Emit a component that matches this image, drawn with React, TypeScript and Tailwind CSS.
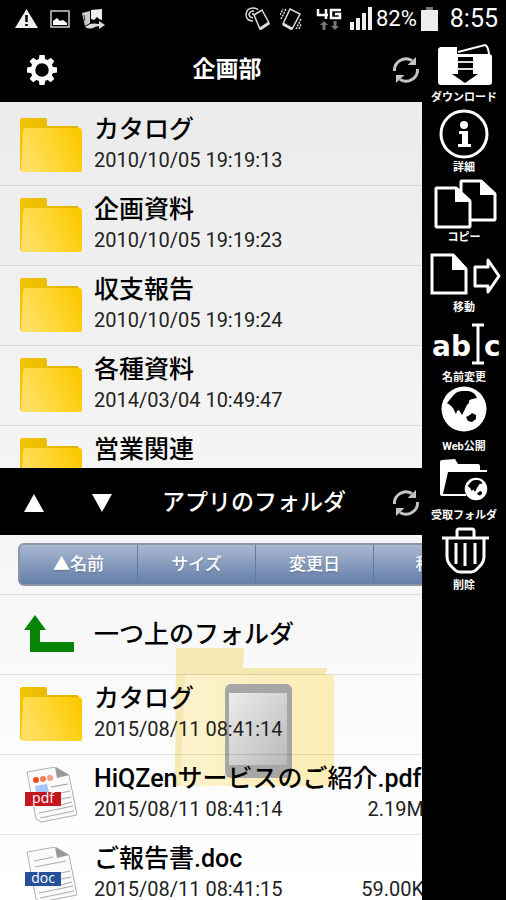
import React from 'react';

interface Entry {
  name: string;
  date?: string;
  size?: string;
  kind: 'folder' | 'up' | 'pdf' | 'doc';
}

const REMOTE: Entry[] = [
  { name: 'カタログ', date: '2010/10/05 19:19:13', kind: 'folder' },
  { name: '企画資料', date: '2010/10/05 19:19:23', kind: 'folder' },
  { name: '収支報告', date: '2010/10/05 19:19:24', kind: 'folder' },
  { name: '各種資料', date: '2014/03/04 10:49:47', kind: 'folder' },
  { name: '営業関連', date: '', kind: 'folder' },
];

const LOCAL: Entry[] = [
  { name: '一つ上のフォルダ', kind: 'up' },
  { name: 'カタログ', date: '2015/08/11 08:41:14', kind: 'folder' },
  { name: 'HiQZenサービスのご紹介.pdf', date: '2015/08/11 08:41:14', size: '2.19M', kind: 'pdf' },
  { name: 'ご報告書.doc', date: '2015/08/11 08:41:15', size: '59.00K', kind: 'doc' },
];

const SORT_KEYS = ['▲名前', 'サイズ', '変更日', '種類'];

/* ---------- file icons ---------- */

const FolderIcon = () => (
  <svg viewBox="0 0 62 56" className="w-[62px] h-14">
    <defs>
      <linearGradient id="folderFront" x1="0" y1="0.6" x2="1" y2="0.3">
        <stop offset="0" stopColor="#ffe066" />
        <stop offset="0.5" stopColor="#ffd633" />
        <stop offset="1" stopColor="#fbc900" />
      </linearGradient>
      <linearGradient id="folderBack" x1="0" y1="0" x2="1" y2="0">
        <stop offset="0" stopColor="#f2c400" />
        <stop offset="1" stopColor="#dfb200" />
      </linearGradient>
    </defs>
    <path d="M0 2Q0 0 2 0H25Q27 0 27 2V8H56Q59 8 59 11V53H2Q0 53 0 51Z" fill="url(#folderBack)" />
    <path d="M3 13Q3 10 6 10H59Q62 10 62 13V52Q62 54 60 54H3Q1 54 1 51Z" fill="url(#folderFront)" />
  </svg>
);

const UpIcon = () => (
  <svg viewBox="0 0 62 56" className="w-[62px] h-14">
    <path d="M15 8L26 23H20V35H54V45H10V23H4Z" fill="#058405" />
  </svg>
);

const DocumentIcon = ({ kind }: { kind: 'pdf' | 'doc' }) => (
  <svg viewBox="0 0 62 56" className="w-[62px] h-14">
    <path d="M7 5L35 0L49 8L57 48L21 55L16 52Z" fill="#fafafa" stroke="#b0b0b0" strokeWidth="1" />
    <path d="M35 0L49 8L37 11Z" fill="#999" />
    {kind === 'pdf' ? (
      <g>
        <circle cx="16" cy="13" r="3" fill="#f04a22" />
        <circle cx="23" cy="12" r="3" fill="#f37a52" />
        <circle cx="30" cy="11" r="3" fill="#f5a080" />
        <path d="M15 19L27 17L29 25H16Z" fill="#a9c4fa" />
        <path d="M31 20L48 17" stroke="#999" />
      </g>
    ) : (
      <path d="M14 14L33 10M15 20L46 14" stroke="#aaa" />
    )}
    <path d="M41 26L50 24M41 32L51 30M41 38L52 35M19 46L53 39M20 51L54 44" stroke="#aaa" strokeWidth="1" />
    <rect x="5" y="25" width="36" height="14" fill={kind === 'pdf' ? '#c4161f' : '#27509a'} />
    <text x="23" y="36" textAnchor="middle" fontSize="14" fill="#fff" fontFamily="'Open Sans', sans-serif">
      {kind}
    </text>
  </svg>
);

const EntryIcon = ({ kind }: { kind: Entry['kind'] }) => {
  if (kind === 'folder') return <FolderIcon />;
  if (kind === 'up') return <UpIcon />;
  return <DocumentIcon kind={kind} />;
};

/* ---------- toolbar icons ---------- */

const GearIcon = () => (
  <svg viewBox="-16 -16 32 32" className="size-8" fill="#fff">
    <circle r="9" fill="none" stroke="#fff" strokeWidth="4.5" />
    {[0, 45, 90, 135, 180, 225, 270, 315].map((a) => (
      <path key={a} d="M-3.5 -9L-2.5 -15H2.5L3.5 -9Z" transform={`rotate(${a})`} />
    ))}
  </svg>
);

const RefreshIcon = () => (
  <svg viewBox="-14 -14 28 28" className="size-7" fill="none" stroke="#c4c4c4" strokeWidth="3">
    <path d="M-11.5 1A11.5 11.5 0 0 1 6 -9.5" />
    <path d="M11.5 -1A11.5 11.5 0 0 1 -6 9.5" />
    <path d="M10 -13V-5H1.5Z" fill="#c4c4c4" stroke="none" />
    <path d="M-10 13V5H-1.5Z" fill="#c4c4c4" stroke="none" />
  </svg>
);

/* ---------- side menu icons ---------- */

const Globe = () => (
  <g>
    <circle r="22.5" fill="#fff" />
    <path
      d="M-17 -6L-12 -12Q-8 -18 -2 -18H4Q11 -17 13 -11L8 -10Q4 -9 5 -6Q3 -5 2 -2L-1 4L-2 6L-5 1L-7 2L-8 5L-11 -1L-14 -4Z"
      fill="#000"
    />
    <path d="M2 8L6 6L8 4L12 6L12 10L8 13L4 12Z" fill="#000" />
  </g>
);

const SIDE_ITEMS = [
  {
    label: 'ダウンロード',
    icon: (
      <svg viewBox="0 0 84 56" className="w-[84px] h-14">
        <path d="M18 12H35V19H67Q70 19 70 22V47Q70 50 67 50H19Q16 50 16 47V14Z" fill="#fff" />
        <path d="M36 17L63 10Q66 11 67 19" fill="none" stroke="#fff" strokeWidth="2" />
        <path d="M36 22H51V39H56L43 48L30 39H36Z" fill="#000" />
        <path d="M35 27H52M35 34H52" stroke="#ddd" strokeWidth="2" />
      </svg>
    ),
  },
  {
    label: '詳細',
    icon: (
      <svg viewBox="0 0 84 56" className="w-[84px] h-14">
        <circle cx="42" cy="29" r="23" fill="none" stroke="#fff" strokeWidth="3" />
        <circle cx="42" cy="20" r="4" fill="#fff" />
        <path d="M37 26H46V39H49V42H36V39H40V29H37Z" fill="#fff" />
      </svg>
    ),
  },
  {
    label: 'コピー',
    icon: (
      <svg viewBox="0 0 84 56" className="w-[84px] h-14" stroke="#fff" strokeWidth="3">
        <path d="M39 6H59L73 19V45H39Z" strokeLinejoin="bevel" />
        <path d="M58 5H60L74 18V20H58Z" fill="#fff" stroke="none" />
        <path d="M14 13H34L48 26V52H14Z" strokeLinejoin="bevel" />
        <path d="M33 12H35L49 25V27H33Z" fill="#fff" stroke="none" />
      </svg>
    ),
  },
  {
    label: '移動',
    icon: (
      <svg viewBox="0 0 84 56" className="w-[84px] h-14" stroke="#fff" strokeWidth="3">
        <path d="M10 10H31L44 24V48H10Z" />
        <path d="M30 9H32L45 23V25H30Z" fill="#fff" stroke="none" />
        <path d="M53 22H66V15L77 31L66 47V41H53Z" strokeLinejoin="round" />
      </svg>
    ),
  },
  {
    label: '名前変更',
    icon: (
      <svg viewBox="0 0 84 56" className="w-[84px] h-14">
        <g fill="#fff" fontSize="28" fontWeight="700" fontFamily="'DejaVu Sans', sans-serif">
          <text x="10" y="41">ab</text>
          <text x="62" y="41">c</text>
        </g>
        <path d="M50 10H62M50 48H62M56 10V48" stroke="#fff" strokeWidth="3" />
      </svg>
    ),
  },
  {
    label: 'Web公開',
    icon: (
      <svg viewBox="0 0 84 55" className="w-[84px] h-[55px]">
        <g transform="translate(42 24)">
          <Globe />
        </g>
      </svg>
    ),
  },
  {
    label: '受取フォルダ',
    icon: (
      <svg viewBox="0 0 84 55" className="w-[84px] h-[55px]">
        <path d="M18 8Q18 6 20 6L33 5L36 10H56Q58 10 58 12V16H65V18H26L21 40H44V42H20Q18 42 18 40Z" fill="#fff" />
        <g transform="translate(54 35) scale(0.5)">
          <Globe />
        </g>
      </svg>
    ),
  },
  {
    label: '削除',
    icon: (
      <svg viewBox="0 0 84 56" className="w-[84px] h-14" fill="none" stroke="#fff" strokeWidth="3">
        <path d="M20 15H67M35 14V8Q35 6 37 6H50Q52 6 52 8V14" />
        <path d="M25 16V33Q25 39 29 43L33 47Q35 49 38 49H49Q52 49 54 47L58 43Q62 39 62 33V16" />
        <path d="M34 20V41M43 20V43M53 20V41" />
      </svg>
    ),
  },
];

/* ---------- layout parts ---------- */

const StatusBar = () => (
  <div className="h-[34px] shrink-0 flex items-center justify-between pl-[15px] pr-2 pt-1 text-white">
    <div className="flex items-center gap-3">
      <svg viewBox="0 0 23 20" className="w-[23px] h-5">
        <path d="M11.5 0L23 19H0Z" fill="#eee" />
        <path d="M11.5 6V13M11.5 15V17" stroke="#000" strokeWidth="2.5" />
      </svg>
      <svg viewBox="0 0 20 18" className="w-5 h-[18px]">
        <rect x="1" y="1" width="18" height="16" fill="none" stroke="#ccc" strokeWidth="1.5" />
        <path d="M3 15V11L7 8L10 11L13 10L17 13V15Z" fill="#fff" />
      </svg>
      <svg viewBox="0 0 23 21" className="w-[23px] h-[21px]">
        <path d="M0 4L8 2V14L3 17Z" fill="#ccc" />
        <path d="M9 1L20 0V11L17 10L15 8L12 11L9 10Z" fill="#eee" />
        <path d="M3 18Q8 21 13 18L17 17V20L23 16L17 12V15Q11 14 8 15Z" fill="#ddd" />
        <path d="M2 6L3 12" stroke="#333" />
      </svg>
    </div>
    <div className="flex items-center">
      <svg viewBox="0 0 25 24" className="w-[25px] h-6 mr-[10px]" fill="none" stroke="#ddd" strokeWidth="1.5">
        <path d="M9 8L17 3L24 16L15 22Z" />
        <path d="M15 22L24 16" strokeWidth="3" />
        <path d="M8 14Q1 14 1 7Q2 1 8 1Q12 1 13 3M8 11Q4 10 4 7Q5 4 9 4M7 7H9" />
      </svg>
      <svg viewBox="0 0 22 24" className="w-[22px] h-6 mr-[14px]" fill="none" stroke="#ddd" strokeWidth="1.5">
        <path d="M10 2L20 7L12 22L3 17Z" />
        <path d="M3 17L12 22" strokeWidth="3" />
        <path d="M1 12L6 2M0 8L3 2M16 22L21 12M19 22L21 17" strokeDasharray="2 1" />
      </svg>
      <svg viewBox="0 0 26 24" className="w-[26px] h-6 mr-2" fill="none" stroke="#fff" strokeWidth="2.5">
        <path d="M2 2V8H12M10 2V12M25 3H15V11H24V7H19" />
        <path d="M8 14L12 18H9.5V23H6.5V18H4ZM19 23L23 19H20.5V14H17.5V19H15Z" fill="#777" stroke="none" />
      </svg>
      <svg viewBox="0 0 22 24" className="w-[22px] h-6 mr-1" fill="#eee">
        <path d="M0 15H4V23H0ZM6 11H10V23H6ZM12 6H16V23H12ZM18 0H22V23H18Z" />
      </svg>
      <span className="text-[22px] leading-6">82%</span>
      <svg viewBox="0 0 17 24" className="w-[17px] h-6 ml-1 mr-3">
        <path d="M5 0H12V3H5Z" fill="#777" />
        <path d="M0 3H17V24H0Z" fill="#eee" />
      </svg>
      <span className="text-[25px] leading-6">8:55</span>
    </div>
  </div>
);

const EntryRow: React.FC<{ entry: Entry }> = ({ entry }) => (
  <li className="h-20 border-b border-black/10">
    <button type="button" className="w-full h-full pl-5 flex items-start gap-3 text-left text-black">
      <span className="shrink-0 pt-3">
        <EntryIcon kind={entry.kind} />
      </span>
      <span className={`flex-1 min-w-0 flex flex-col ${entry.kind === 'up' ? 'pt-6' : 'pt-2'}`}>
        <span className="text-[25px] leading-8 font-medium whitespace-nowrap">{entry.name}</span>
        {entry.date && (
          <span className="flex justify-between text-xl leading-7 text-[#222] -mr-0.5">
            <span>{entry.date}</span>
            <span>{entry.size}</span>
          </span>
        )}
      </span>
    </button>
  </li>
);

const DragGhost = () => (
  <svg viewBox="0 0 160 138" className="absolute left-[175px] top-[113px] w-40 h-[138px]">
    <defs>
      <linearGradient id="ghostScreen" x1="0" y1="0" x2="1" y2="1">
        <stop offset="0" stopColor="#ececec" />
        <stop offset="1" stopColor="#b9b9b9" />
      </linearGradient>
      <linearGradient id="ghostFolder" x1="0" y1="0" x2="1" y2="0">
        <stop offset="0" stopColor="#fcf2cc" />
        <stop offset="1" stopColor="#fbedb4" />
      </linearGradient>
    </defs>
    <path d="M1 0H66Q69 0 69 3L68 20H152L150 27H10V138H0Z" fill="#f5e8b0" />
    <path d="M10 27H159V138H5Z" fill="url(#ghostFolder)" />
    <rect x="50" y="36" width="67" height="94" rx="6" fill="#a6a6a6" />
    <rect x="54" y="45" width="58" height="72" fill="url(#ghostScreen)" />
  </svg>
);

export default function App() {
  return (
    <div className="h-screen flex flex-col bg-black overflow-hidden font-[Roboto,'Noto_Sans_CJK_JP',sans-serif]">
      <StatusBar />
      <div className="flex-1 min-h-0 flex">
        <main className="flex-1 min-w-0 flex flex-col">
          <header className="h-[68px] pt-1 shrink-0 flex items-center text-white">
            <button type="button" aria-label="設定" className="w-[66px] pl-[26px]">
              <GearIcon />
            </button>
            <h1 className="flex-1 text-center text-[23px] leading-8 font-bold">企画部</h1>
            <button type="button" aria-label="更新" className="w-[34px] pl-1">
              <RefreshIcon />
            </button>
          </header>

          <section className="flex-1 basis-0 min-h-0 overflow-hidden bg-linear-to-b from-[#ebebeb] to-[#f5f5f5]">
            <ul className="pt-1">
              {REMOTE.map((e) => (
                <EntryRow key={e.name} entry={e} />
              ))}
            </ul>
          </section>

          <header className="h-[67px] pt-1 shrink-0 flex items-center text-white">
            <button type="button" aria-label="上へ" className="w-[68px] flex justify-center">
              <svg viewBox="0 0 20 18" className="w-5 h-[18px]">
                <path d="M10 0L20 18H0Z" fill="#fff" />
              </svg>
            </button>
            <button type="button" aria-label="下へ" className="w-[68px] flex justify-center">
              <svg viewBox="0 0 20 18" className="w-5 h-[18px]">
                <path d="M10 18L20 0H0Z" fill="#fff" />
              </svg>
            </button>
            <h2 className="flex-1 pr-4 text-center text-[23px] leading-8 font-medium whitespace-nowrap">アプリのフォルダ</h2>
            <button type="button" aria-label="更新" className="w-[34px] pl-1">
              <RefreshIcon />
            </button>
          </header>

          <section className="relative flex-1 basis-0 min-h-0 overflow-hidden bg-linear-to-b from-[#f5f5f5] via-[#fbfbfb] to-white">
            <DragGhost />
            <div className="relative pl-[18px] py-2 border-b border-black/10">
              <div className="w-max flex rounded-md overflow-hidden border-2 border-[#8c95a3] bg-linear-to-b from-[#a9b8d0] to-[#647fa9]">
                {SORT_KEYS.map((key) => (
                  <button
                    key={key}
                    type="button"
                    className="w-[118px] h-[39px] text-[17px] leading-6 font-medium text-white text-shadow-sm border-r border-[#5f7aa6]"
                  >
                    {key}
                  </button>
                ))}
              </div>
            </div>
            <ul className="relative">
              {LOCAL.map((e) => (
                <EntryRow key={e.name} entry={e} />
              ))}
            </ul>
          </section>
        </main>

        <nav className="w-[84px] shrink-0 pt-px text-white">
          {SIDE_ITEMS.map((item) => (
            <button key={item.label} type="button" className="w-full flex flex-col items-center">
              {item.icon}
              <span className="text-[11px] leading-[14px] font-bold whitespace-nowrap">{item.label}</span>
            </button>
          ))}
        </nav>
      </div>
    </div>
  );
}
